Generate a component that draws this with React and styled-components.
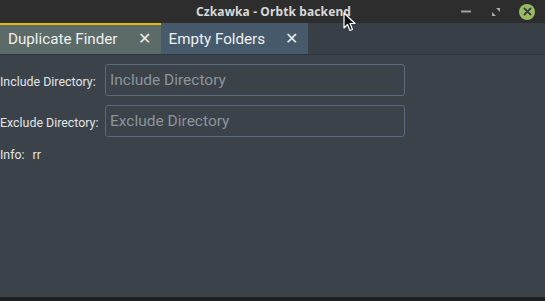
import React from 'react'
import styled, { createGlobalStyle } from 'styled-components'

const GlobalStyle = createGlobalStyle`
    html, body {
        margin: 0;
        padding: 0;
        background: #1f2022;
        overflow: hidden;
    }
`

const Window = styled.div`
    width: 545px;
    height: 301px;
    display: flex;
    flex-direction: column;
    position: relative;
    font-family: Roboto, "Open Sans", sans-serif;
`

const TitleBar = styled.div`
    height: 23px;
    flex: none;
    background: #2d2d2d;
    display: flex;
    align-items: center;
    justify-content: center;
    position: relative;
`

const TitleText = styled.div`
    color: #d8d8d8;
    font-family: "Noto Sans", "DejaVu Sans", sans-serif;
    font-weight: 700;
    font-size: 12px;
    letter-spacing: 0.01em;
    margin-left: 2px;
`

const Controls = styled.div`
    position: absolute;
    right: 10px;
    top: 0;
    height: 23px;
    display: flex;
    align-items: center;
    gap: 16px;
`

const CtrlIcon = styled.div`
    width: 14px;
    height: 14px;
    display: flex;
    align-items: center;
    justify-content: center;
`

const CloseBtn = styled.div`
    width: 16px;
    height: 16px;
    border-radius: 50%;
    background: #98bc64;
    display: flex;
    align-items: center;
    justify-content: center;
`

const TabBar = styled.div`
    height: 31px;
    flex: none;
    background: #393f46;
    display: flex;
    border-bottom: 1px solid #31363c;
`

const Tab = styled.div`
    box-sizing: border-box;
    display: flex;
    align-items: center;
    gap: 20px;
    padding: 0 10px 2px 8px;
    background: ${p => (p.$active ? '#5c6b67' : '#465a6c')};
    border-top: 2px solid ${p => (p.$active ? '#e8b40e' : '#465a6c')};
    color: #eef0f0;
    font-size: 15.2px;
`

const TabClose = styled.span`
    font-size: 16px;
    color: #e8eaea;
`

const Content = styled.div`
    flex: 1;
    background: #3b424a;
    padding-top: 9px;
    display: flex;
    flex-direction: column;
    gap: 9px;
`

const Row = styled.div`
    display: flex;
    align-items: center;
    height: 32px;
`

const Label = styled.div`
    width: 105px;
    color: #e2e4e6;
    font-size: 12.4px;
    flex: none;
    margin-top: 2px;
`

const Input = styled.input`
    width: 300px;
    height: 32px;
    box-sizing: border-box;
    background: transparent;
    border: 1.5px solid #57697b;
    border-radius: 3px;
    padding: 0 4px;
    font-family: Roboto, sans-serif;
    font-size: 15.5px;
    color: #e0e0e0;
    outline: none;
    &::placeholder {
        color: #8c949b;
    }
`

const InfoRow = styled.div`
    display: flex;
    gap: 8px;
    color: #e2e4e6;
    font-size: 12.4px;
    margin-top: 1px;
`

const BottomStrip = styled.div`
    height: 4px;
    flex: none;
    background: #1e1f21;
`

const Cursor = styled.svg`
    position: absolute;
    left: 343px;
    top: 12px;
`

export default function App() {
    return (
        <>
            <GlobalStyle />
            <Window>
                <TitleBar>
                    <TitleText>Czkawka - Orbtk backend</TitleText>
                    <Controls>
                        <CtrlIcon>
                            <svg width="10" height="3"><rect width="10" height="2" y="0.5" fill="#a0a0a0" /></svg>
                        </CtrlIcon>
                        <CtrlIcon>
                            <svg width="10" height="10" viewBox="0 0 10 10">
                                <path d="M5 1 L9 1 L9 5 Z M5 9 L1 9 L1 5 Z" fill="#a8a8a8" />
                            </svg>
                        </CtrlIcon>
                        <CloseBtn>
                            <svg width="9" height="9" viewBox="0 0 9 9">
                                <path d="M1.5 1.5 L7.5 7.5 M7.5 1.5 L1.5 7.5" stroke="#3a3a3a" strokeWidth="1.8" strokeLinecap="round" />
                            </svg>
                        </CloseBtn>
                    </Controls>
                </TitleBar>
                <TabBar>
                    <Tab $active>
                        <span>Duplicate Finder</span>
                        <TabClose>✕</TabClose>
                    </Tab>
                    <Tab>
                        <span>Empty Folders</span>
                        <TabClose>✕</TabClose>
                    </Tab>
                </TabBar>
                <Content>
                    <Row>
                        <Label>Include Directory:</Label>
                        <Input placeholder="Include Directory" />
                    </Row>
                    <Row>
                        <Label>Exclude Directory:</Label>
                        <Input placeholder="Exclude Directory" />
                    </Row>
                    <InfoRow>
                        <span>Info:</span>
                        <span>rr</span>
                    </InfoRow>
                </Content>
                <BottomStrip />
                <Cursor width="14" height="20" viewBox="0 0 14 20">
                    <path d="M1 1 L1 16 L4.5 12.5 L7 18.5 L9.5 17.5 L7 11.5 L12 11.5 Z" fill="#111" stroke="#fff" strokeWidth="1.2" strokeLinejoin="round" />
                </Cursor>
            </Window>
        </>
    )
}
